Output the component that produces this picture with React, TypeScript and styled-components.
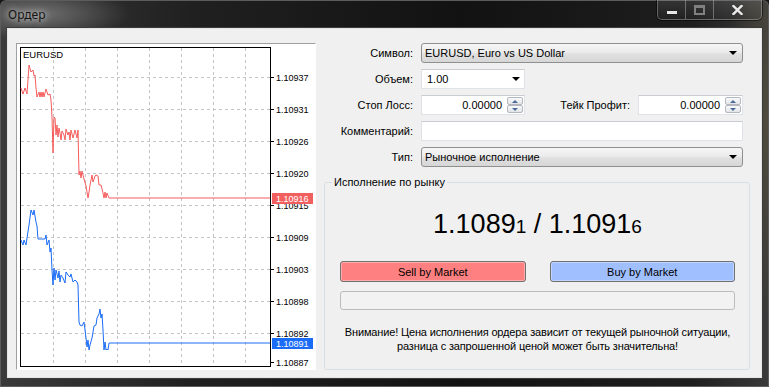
import React from 'react';
import styled, { createGlobalStyle } from 'styled-components';

const GlobalStyle = createGlobalStyle`
  html, body {
    margin: 0;
    padding: 0;
    background: #161616;
  }
  body {
    width: 769px;
    height: 387px;
    overflow: hidden;
    font-family: "Liberation Sans", Arial, sans-serif;
  }
`;

const Window = styled.div`
  width: 769px;
  height: 387px;
  box-sizing: border-box;
  display: flex;
  flex-direction: column;
  padding: 0 7px 9px 7px;
  border-radius: 6px 6px 0 0;
  background:
    radial-gradient(ellipse 90px 26px at 40px 14px, rgba(170, 170, 170, 0.5), transparent),
    radial-gradient(ellipse 40px 200px at 766px 120px, rgba(120, 110, 70, 0.35), transparent),
    linear-gradient(90deg, #3a3a3a 0, #202020 25%, #121212 60%, #1e1e1e 90%, #3a3a3a 100%);
  box-shadow: inset 0 0 0 1px #5c5c5c;
`;

const TitleBar = styled.div`
  height: 28px;
  display: flex;
  justify-content: space-between;
  align-items: flex-start;
`;

const Title = styled.div`
  margin: 8px 0 0 1px;
  font-family: "Noto Sans", "Open Sans", sans-serif;
  font-size: 12px;
  line-height: 14px;
  color: #141414;
  text-shadow: 0 0 6px rgba(230, 230, 230, 0.9), 0 0 10px rgba(200, 200, 200, 0.7);
`;

const CaptionGroup = styled.div`
  display: flex;
  height: 19px;
  border: 1px solid rgba(190, 190, 190, 0.45);
  border-top: none;
  border-radius: 0 0 5px 5px;
  overflow: hidden;
  box-shadow: 0 0 0 1px rgba(0, 0, 0, 0.5);
`;

const CaptionButton = styled.div<{ $w: number }>`
  width: ${({ $w }) => $w}px;
  display: flex;
  align-items: center;
  justify-content: center;
  background: linear-gradient(rgba(255, 255, 255, 0.1), rgba(255, 255, 255, 0.02));
  & + & {
    border-left: 1px solid rgba(190, 190, 190, 0.45);
  }
`;

const MinGlyph = styled.span`
  width: 10px;
  height: 3px;
  margin-top: 6px;
  background: #e6e6e6;
  box-shadow: 0 0 1px #000;
`;

const MaxGlyph = styled.span`
  width: 7px;
  height: 5px;
  border: 2px solid #808080;
  border-top-width: 3px;
`;

const Client = styled.div`
  flex: 1;
  display: flex;
  gap: 8px;
  padding: 14px 11px 7px 8px;
  background: #f0f0f0;
  border: 1px solid #e4e4e4;
  box-shadow: 0 0 0 1px #3c3c3c;
`;

const ChartPanel = styled.div`
  width: 300px;
  height: 327px;
  box-sizing: border-box;
  background: #fff;
  border: 1px solid;
  border-color: #a0a0a0 #fff #fff #a0a0a0;
  svg {
    display: block;
  }
`;

const Form = styled.div`
  width: 426px;
  display: flex;
  flex-direction: column;
  font-size: 11px;
  color: #000;
`;

const Row = styled.div`
  display: flex;
  align-items: center;
  height: 20px;
  margin-bottom: 6px;
`;

const Label = styled.div<{ $w?: number }>`
  width: ${({ $w }) => $w ?? 89}px;
  margin-right: 8px;
  text-align: right;
  white-space: nowrap;
`;

const Select = styled.div<{ $w?: number }>`
  width: ${({ $w }) => ($w ? `${$w}px` : '322px')};
  height: 20px;
  box-sizing: border-box;
  display: flex;
  align-items: center;
  justify-content: space-between;
  padding: 0 5px 0 3px;
  border: 1px solid #8e8f8f;
  border-radius: 3px;
  background: linear-gradient(#f6f6f6 0%, #ececec 45%, #e0e0e0 55%, #d6d6d6 100%);
`;

const Combo = styled.div<{ $w?: number }>`
  width: ${({ $w }) => $w ?? 104}px;
  height: 20px;
  box-sizing: border-box;
  display: flex;
  align-items: center;
  justify-content: space-between;
  padding: 0 4px 0 5px;
  border: 1px solid #dfe2e6;
  border-top-color: #c9ccd1;
  background: #fff;
`;

const Arrow = styled.span`
  width: 0;
  height: 0;
  border-left: 4px solid transparent;
  border-right: 4px solid transparent;
  border-top: 4px solid #000;
`;

const Edit = styled.div<{ $w?: number }>`
  width: ${({ $w }) => ($w ? `${$w}px` : '322px')};
  height: 20px;
  box-sizing: border-box;
  display: flex;
  align-items: center;
  justify-content: flex-end;
  padding: 0 1px 0 4px;
  border: 1px solid #dfe2e6;
  border-top-color: #c9ccd1;
  background: #fff;
`;

const EditText = styled.span`
  flex: 1;
  text-align: right;
  padding-right: 5px;
`;

const Spinner = styled.div`
  width: 16px;
  display: flex;
  flex-direction: column;
`;

const SpinButton = styled.div<{ $down?: boolean }>`
  height: 8px;
  box-sizing: border-box;
  display: flex;
  align-items: center;
  justify-content: center;
  border: 1px solid #b4b8be;
  border-radius: 2px;
  background: linear-gradient(#fafafa, #e2e4e8);
  &::after {
    content: '';
    border-left: 3px solid transparent;
    border-right: 3px solid transparent;
    ${({ $down }) =>
      $down ? 'border-top: 3px solid #4a6a9a;' : 'border-bottom: 3px solid #4a6a9a;'}
  }
`;

const Group = styled.fieldset`
  margin: 3px 0 0 0;
  padding: 0 14px 0 15px;
  min-width: 0;
  height: 194px;
  box-sizing: border-box;
  border: 1px solid #d5dfe5;
  border-radius: 3px;
`;

const Legend = styled.legend`
  margin-left: -8px;
  padding: 0 2px;
  font-size: 11px;
  line-height: 13px;
`;

const Price = styled.div`
  margin-top: 19px;
  text-align: center;
  font-size: 27px;
  line-height: 32px;
  color: #000;
  small {
    font-size: 19px;
  }
`;

const Buttons = styled.div`
  margin-top: 18px;
  display: grid;
  grid-template-columns: 1fr 1fr;
  gap: 24px;
`;

const MarketButton = styled.div<{ $bg: string }>`
  height: 21px;
  box-sizing: border-box;
  display: flex;
  align-items: center;
  justify-content: center;
  border: 1px solid #707070;
  border-radius: 3px;
  background: ${({ $bg }) => $bg};
  box-shadow: inset 0 0 0 1px rgba(255, 255, 255, 0.35);
  font-size: 11px;
`;

const Progress = styled.div`
  margin-top: 9px;
  height: 19px;
  box-sizing: border-box;
  border: 1px solid #bcbcbc;
  border-radius: 3px;
  background: #f2f2f2;
`;

const Warning = styled.div`
  margin-top: 15px;
  display: flex;
  flex-direction: column;
  align-items: center;
  font-size: 11px;
  line-height: 14px;
  letter-spacing: -0.15px;
  white-space: nowrap;
`;

const redPath =
  'M21,88 L23,94 L25,88 L27,94 L29,65 L31,72 L33,70 L34,76 L35,75 L36,88 L37,97 L39,92 L40,97 L41,92 L42,97 L43,92 L44,97 L46,89 L48,95 L50,94 L51,100 L52,117 L53,153 L54,117 L55,118 L56,135 L57,125 L58,137 L59,128 L60,133 L61,140 L62,131 L64,135 L65,140 L66,129 L68,135 L69,132 L70,140 L71,130 L73,138 L75,130 L77,138 L78,130 L79,175 L80,171 L81,178 L82,171 L84,179 L86,186 L88,198 L89,192 L90,185 L92,175 L93,182 L95,176 L96,175 L98,176 L99,185 L101,185 L103,193 L104,198 L105,192 L106,198 L107,193 L109,198 L270,198';

const bluePath =
  'M21,240 L23,245 L24,240 L26,245 L27,238 L29,225 L31,210 L33,215 L34,210 L36,222 L37,226 L38,239 L45,239 L46,235 L47,245 L49,240 L50,252 L51,248 L52,270 L53,285 L54,268 L55,280 L56,270 L58,278 L59,271 L60,282 L61,275 L63,278 L65,283 L66,272 L68,275 L70,277 L71,274 L73,282 L75,280 L77,282 L78,285 L79,322 L80,325 L82,326 L84,322 L85,330 L86,338 L87,347 L88,340 L89,350 L90,345 L92,338 L94,326 L96,325 L97,318 L99,314 L100,309 L101,318 L102,314 L103,330 L104,350 L105,342 L106,350 L107,349 L108,350 L109,343 L270,343';

const gridY = [77, 109, 141, 173, 205, 237, 269, 301, 333];
const gridX = [53, 85, 117, 149, 181, 213, 245];
const axis: [number, string][] = [
  [77, '1.10937'],
  [109, '1.10931'],
  [141, '1.10926'],
  [173, '1.10920'],
  [205, '1.10915'],
  [237, '1.10909'],
  [269, '1.10903'],
  [301, '1.10898'],
  [333, '1.10892'],
  [362, '1.10887'],
];

function PriceChart() {
  return (
    <svg width={298} height={325} fontFamily="Liberation Sans, Arial, sans-serif">
      <g transform="translate(-17 -44)">
        {gridY.map((y) => (
          <line key={'h' + y} x1={21} x2={270} y1={y + 0.5} y2={y + 0.5} stroke="#c4c4c4" strokeDasharray="3 3" />
        ))}
        {gridX.map((x) => (
          <line key={'v' + x} x1={x + 0.5} x2={x + 0.5} y1={48} y2={366} stroke="#c4c4c4" strokeDasharray="3 3" />
        ))}
        <rect x={20.5} y={47.5} width={250} height={319} fill="none" stroke="#000" />
        {axis.map(([y, t]) => (
          <g key={t}>
            <line x1={270} x2={274} y1={y + 0.5} y2={y + 0.5} stroke="#000" />
            <text x={276} y={y + 3.5} fontSize={9} fill="#000">
              {t}
            </text>
          </g>
        ))}
        <text x={23} y={58} fontSize={9.5} fill="#000">
          EURUSD
        </text>
        <path d={redPath} fill="none" stroke="#f65c5c" strokeWidth={1} />
        <path d={bluePath} fill="none" stroke="#1a6cf6" strokeWidth={1} />
        <rect x={272} y={193} width={41} height={11} fill="#f25f5f" />
        <text x={276} y={202} fontSize={9} fill="#fff">
          1.10916
        </text>
        <rect x={272} y={338} width={41} height={11} fill="#1a6cf6" />
        <text x={276} y={347} fontSize={9} fill="#fff">
          1.10891
        </text>
      </g>
    </svg>
  );
}

function NumberEdit({ value, width }: { value: string; width: number }) {
  return (
    <Edit $w={width}>
      <EditText>{value}</EditText>
      <Spinner>
        <SpinButton />
        <SpinButton $down />
      </Spinner>
    </Edit>
  );
}

export default function App() {
  return (
    <>
      <GlobalStyle />
      <Window>
        <TitleBar>
          <Title>Ордер</Title>
          <CaptionGroup>
            <CaptionButton $w={27}>
              <MinGlyph />
            </CaptionButton>
            <CaptionButton $w={27}>
              <MaxGlyph />
            </CaptionButton>
            <CaptionButton $w={47}>
              <svg width={11} height={10} viewBox="0 0 11 10">
                <path d="M1.5 1 L9.5 9 M9.5 1 L1.5 9" stroke="#ececec" strokeWidth={2.4} strokeLinecap="square" />
              </svg>
            </CaptionButton>
          </CaptionGroup>
        </TitleBar>
        <Client>
          <ChartPanel>
            <PriceChart />
          </ChartPanel>
          <Form>
            <Row>
              <Label>Символ:</Label>
              <Select>
                <span>EURUSD, Euro vs US Dollar</span>
                <Arrow />
              </Select>
            </Row>
            <Row>
              <Label>Объем:</Label>
              <Combo>
                <span>1.00</span>
                <Arrow />
              </Combo>
            </Row>
            <Row>
              <Label>Стоп Лосс:</Label>
              <NumberEdit value="0.00000" width={104} />
              <Label $w={105}>Тейк Профит:</Label>
              <NumberEdit value="0.00000" width={105} />
            </Row>
            <Row>
              <Label>Комментарий:</Label>
              <Edit />
            </Row>
            <Row>
              <Label>Тип:</Label>
              <Select>
                <span>Рыночное исполнение</span>
                <Arrow />
              </Select>
            </Row>
            <Group>
              <Legend>Исполнение по рынку</Legend>
              <Price>
                1.1089<small>1</small> / 1.1091<small>6</small>
              </Price>
              <Buttons>
                <MarketButton $bg="#ff8080">Sell by Market</MarketButton>
                <MarketButton $bg="#a0bfff">Buy by Market</MarketButton>
              </Buttons>
              <Progress />
              <Warning>
                <span>Внимание! Цена исполнения ордера зависит от текущей рыночной ситуации,</span>
                <span>разница с запрошенной ценой может быть значительна!</span>
              </Warning>
            </Group>
          </Form>
        </Client>
      </Window>
    </>
  );
}
